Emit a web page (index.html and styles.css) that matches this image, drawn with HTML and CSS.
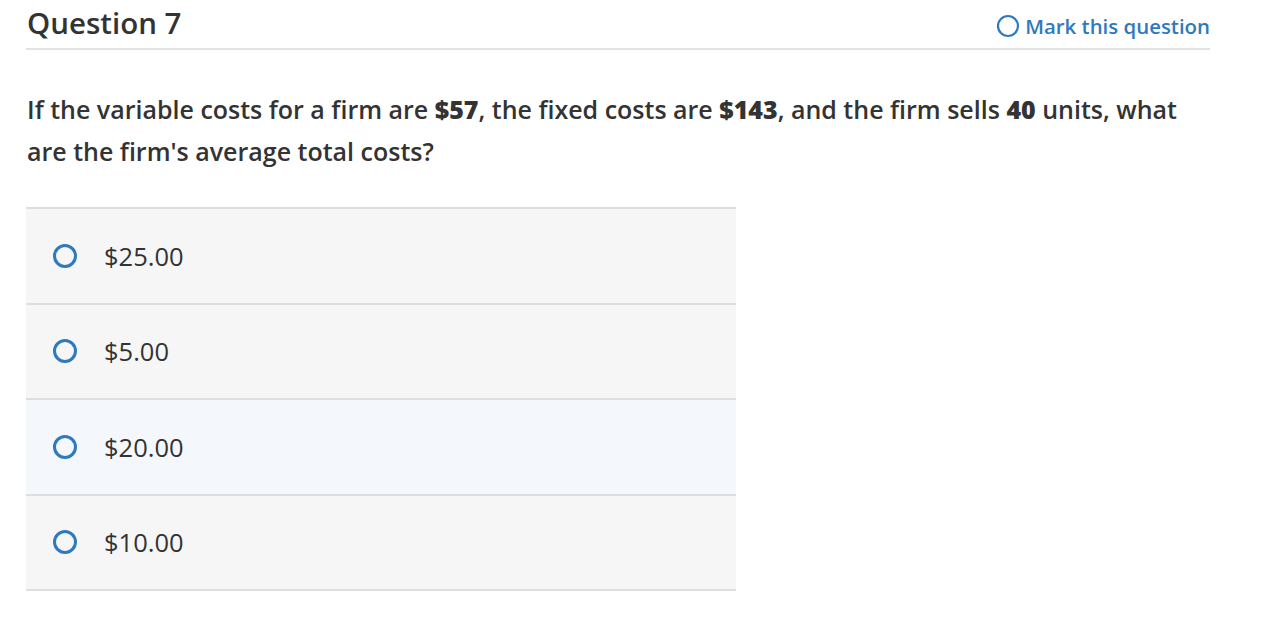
FILE: index.html
```html
<!DOCTYPE html>
<html>
<head>
<meta charset="utf-8">
<link rel="stylesheet" href="styles.css">
</head>
<body>
<div class="page">
  <header class="qhead">
    <h1 class="qtitle">Question 7</h1>
    <a class="mark" href="#">
      <svg class="mark-icon" width="24" height="24" viewBox="0 0 24 24"><circle cx="12" cy="12" r="10" fill="none" stroke="#2f79bf" stroke-width="2.2"/></svg>
      <span>Mark this question</span>
    </a>
  </header>
  <p class="prompt">If the variable costs for a firm are <b>$57</b>, the fixed costs are <b>$143</b>, and the firm sells <b>40</b> units, what are the firm's average total costs?</p>
  <ul class="options">
    <li class="opt"><span class="radio"></span><span class="label">$25.00</span></li>
    <li class="opt"><span class="radio"></span><span class="label">$5.00</span></li>
    <li class="opt hover"><span class="radio"></span><span class="label">$20.00</span></li>
    <li class="opt"><span class="radio"></span><span class="label">$10.00</span></li>
  </ul>
</div>
</body>
</html>
```
FILE: styles.css
```css
* { box-sizing: border-box; }
html, body { margin: 0; padding: 0; background: #fff; }
body { font-family: "Open Sans", "Noto Sans", sans-serif; color: #333; font-variant-ligatures: none; }
.page { width: 1184px; margin-left: 26px; }
.qhead {
  display: flex;
  justify-content: space-between;
  align-items: flex-end;
  height: 50px;
  border-bottom: 2px solid #e2e2e6;
  padding-bottom: 6px;
}
.qtitle {
  margin: 0;
  font-size: 29.5px;
  font-weight: 600;
  color: #333;
  line-height: 38px;
  padding-left: 1px;
}
.mark {
  display: flex;
  align-items: center;
  gap: 5px;
  color: #2f79bf;
  text-decoration: none;
  font-size: 20.4px;
  font-weight: 600;
  line-height: 28px;
  margin-bottom: 2px;
}
.mark-icon { display: block; }
.prompt {
  margin: 38px 0 0 1px;
  font-size: 25px;
  line-height: 42px;
  font-weight: 600;
  color: #333;
  width: 1170px;
}
.prompt b { font-weight: 800; }
.options {
  list-style: none;
  margin: 35px 0 0 0;
  padding: 0;
  width: 710px;
  border-top: 2px solid #dedee2;
}
.opt {
  display: flex;
  align-items: center;
  height: 95.5px;
  background: #f6f6f6;
  border-bottom: 2px solid #dedee2;
  padding-left: 27px;
}
.opt.hover { background: #f4f8fc; }
.radio {
  width: 24px;
  height: 24px;
  border: 3px solid #2f79bf;
  border-radius: 50%;
  flex: none;
}
.label {
  margin-left: 27px;
  font-size: 25.5px;
  font-weight: 400;
  color: #333;
}
```
